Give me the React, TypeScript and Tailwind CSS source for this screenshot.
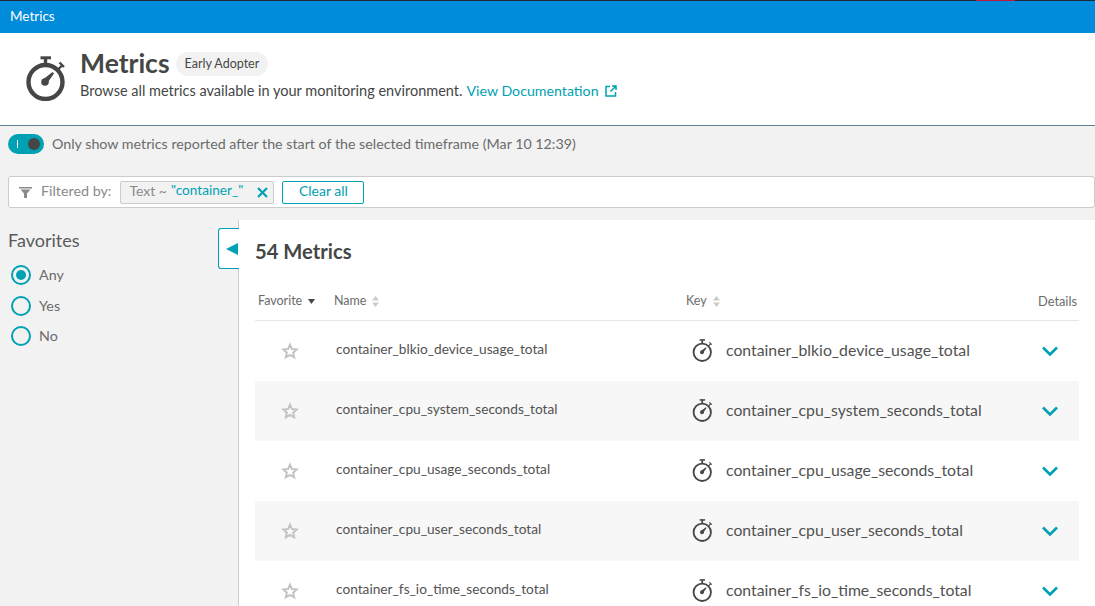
const Watch = ({ w, h, ring = 4.4 }: { w: number; h: number; ring?: number }) => (
  <svg width={w} height={h} viewBox="0 0 40 45" fill="none" className="shrink-0 text-[#454646]">
    <circle cx="19.5" cy="26" r="17" stroke="currentColor" strokeWidth={ring} />
    <path d="M14.5 1.8h10.500" stroke="currentColor" strokeWidth="3" />
    <path d="M19.500 2v7" stroke="currentColor" strokeWidth="3.400" />
    <path d="M32 13.500l3.500-3.500M33.500 6.500l4.500 4.500" stroke="currentColor" strokeWidth="2.400" />
    <circle cx="19" cy="26" r="3.800" fill="currentColor" />
    <path d="M17 23.500l9.500-7.500 1.500 1.500-7 10z" fill="currentColor" />
  </svg>
);

const Sort = () => (
  <svg width="7" height="11" viewBox="0 0 7 11" className="ml-[6px]">
    <path d="M3.5 0L7 4.500H0zM3.500 11L0 6.500h7z" fill="#cccccc" />
  </svg>
);

const Star = () => (
  <svg width="18" height="18" viewBox="0 0 24 24" fill="none" stroke="#c4c4c4" strokeWidth="2.600">
    <path d="M12 3.500l2.600 5.900 6.400.6-4.800 4.200 1.400 6.300-5.600-3.300-5.600 3.300 1.400-6.300L3 10l6.400-.6z" />
  </svg>
);

const Radio = ({ label, on }: { label: string; on?: boolean }) => (
  <div className="flex h-[30.5px] items-center">
    <span className="flex h-[20px] w-[20px] items-center justify-center rounded-full border-2 border-[#00a1b2]">
      {on && <span className="h-[10px] w-[10px] rounded-full bg-[#00a1b2]" />}
    </span>
    <span className="ml-[8px] pb-[1px] text-[14.3px] text-[#6b6b6b]">{label}</span>
  </div>
);

const metrics = [
  "container_blkio_device_usage_total",
  "container_cpu_system_seconds_total",
  "container_cpu_usage_seconds_total",
  "container_cpu_user_seconds_total",
  "container_fs_io_time_seconds_total",
];

export default function App() {
  return (
    <div className="flex h-[606px] w-[1095px] flex-col overflow-hidden bg-[#f2f2f2] font-['Lato',sans-serif] text-[#454646]">
      <div className="relative h-[33px] shrink-0 border-t border-[#1b2a33] bg-[#008cdb] pl-[10px] text-[13.500px] leading-[31px] text-white">
        Metrics
        <span className="absolute left-[976px] top-[-1px] h-[1px] w-[39px] bg-[#c4153f]" />
      </div>
      <div className="flex h-[93px] shrink-0 border-b border-[#5f7f93] bg-white pl-[26px]">
        <div className="pt-[23px]">
          <Watch w={40} h={45} />
        </div>
        <div className="ml-[14px]">
          <div className="mt-[19px] flex h-[24px] items-center">
            <span className="pb-[2px] text-[26.500px] font-bold leading-[24px] text-[#454646]">Metrics</span>
            <span className="ml-[6px] flex h-[24px] items-center rounded-full bg-[#f2f2f2] px-[9px] text-[12.500px]">Early Adopter</span>
          </div>
          <div className="mt-[4px] flex items-center text-[14.500px]">
            Browse all metrics available in your monitoring environment.
            <span className="ml-[4px] text-[14.200px] text-[#00a1b2]">View Documentation</span>
            <svg width="12" height="12" viewBox="0 0 12 12" fill="none" stroke="#00a1b2" strokeWidth="1.500" className="ml-[6px]">
              <path d="M5 1.500H1v9.500h9.500V7M7 1h4v4M11 1L5.500 6.500" />
            </svg>
          </div>
        </div>
      </div>
      <div className="ml-[8px] mt-[8px] flex h-[20px] items-center">
        <span className="flex h-[20px] w-[36px] items-center justify-between rounded-full bg-[#00a1b2] pl-[9px] pr-[4px]">
          <span className="h-[8px] w-[1px] bg-white" />
          <span className="h-[12px] w-[12px] rounded-full bg-[#454646]" />
        </span>
        <span className="ml-[8px] text-[14.250px] text-[#6b6b6b]">Only show metrics reported after the start of the selected timeframe (Mar 10 12:39)</span>
      </div>
      <div className="ml-[8px] mt-[22px] flex h-[32px] shrink-0 items-center rounded-[3px] border border-[#cccccc] bg-white pl-[10px]">
        <svg width="13" height="13" viewBox="0 0 13 13" fill="#8a8a8a">
          <path d="M0 1h13v1.600H0zM1.500 3.400h10L8 7.500V12l-3 0V7.500z" />
        </svg>
        <span className="ml-[9px] pb-[2px] text-[14.300px] text-[#8a8a8a]">Filtered by:</span>
        <span className="ml-[9px] flex h-[23px] w-[154px] items-center rounded-[2px] border border-[#cccccc] bg-[#f2f2f2] pb-[3px] pl-[8px] text-[14px] text-[#8a8a8a]">
          Text ~ <span className="ml-[4px] text-[13.600px] text-[#00a1b2]">"container_"</span>
          <svg width="11" height="11" viewBox="0 0 11 11" stroke="#00a1b2" strokeWidth="2.200" className="ml-[14px] mt-[3px]">
            <path d="M1 1l9 9M10 1l-9 9" />
          </svg>
        </span>
        <span className="ml-[8px] flex h-[23px] w-[82px] items-center justify-center rounded-[2px] border border-[#00a1b2] pb-[3px] text-[14px] text-[#00a1b2]">Clear all</span>
      </div>
      <div className="mt-[12px] flex min-h-0 flex-1">
        <div className="relative w-[239px] shrink-0 border-r border-[#cccccc] pl-[8px]">
          <div className="mt-[8px] text-[18px] leading-[24px] text-[#5a5a5a]">Favorites</div>
          <div className="ml-[3px] mt-[8px]">
            <Radio label="Any" on />
            <Radio label="Yes" />
            <Radio label="No" />
          </div>
          <span className="absolute right-[-1px] top-[8px] flex h-[41px] w-[21px] items-center rounded-l-[3px] border border-r-0 border-[#00a1b2] bg-white pl-[7px]">
            <span className="h-0 w-0 border-y-[6px] border-r-[12px] border-y-transparent border-r-[#00a1b2]" />
          </span>
        </div>
        <div className="flex-1 bg-white pl-[16px] pr-[16px]">
          <div className="mt-[19px] text-[20.200px] font-bold leading-[24px] text-[#454646]">54 Metrics</div>
          <div className="mt-[24px] flex h-[34px] items-center border-b border-[#e6e6e6] pb-[4px] text-[12.500px] text-[#6b6b6b]">
            <div className="flex w-[79px] items-center pl-[3px]">
              Favorite
              <svg width="7" height="5" viewBox="0 0 7 5" className="ml-[6px]"><path d="M0 0h7L3.500 5z" fill="#454646" /></svg>
            </div>
            <div className="flex w-[352px] items-center">Name<Sort /></div>
            <div className="flex flex-1 items-center">Key<Sort /></div>
            <div className="pr-[2px] text-[12.800px]">Details</div>
          </div>
          {metrics.map((m, i) => (
            <div key={m} className={`flex h-[60px] items-center ${i % 2 ? "bg-[#f7f7f7]" : "bg-white"}`}>
              <div className="flex w-[70px] justify-center"><Star /></div>
              <div className="ml-[11px] w-[356px] pb-[3px] text-[13.700px] text-[#525252]">{m}</div>
              <div className="flex flex-1 items-center">
                <div className="pb-[1px]"><Watch w={21} h={23} ring={3.600} /></div>
                <span className="ml-[13px] pb-[2px] text-[15.800px] text-[#525252]">{m}</span>
              </div>
              <svg width="16" height="10" viewBox="0 0 16 10" fill="none" stroke="#00a1b2" strokeWidth="2.600" className="mr-[21px]">
                <path d="M1 1.500l7 7 7-7" />
              </svg>
            </div>
          ))}
        </div>
      </div>
    </div>
  );
}
